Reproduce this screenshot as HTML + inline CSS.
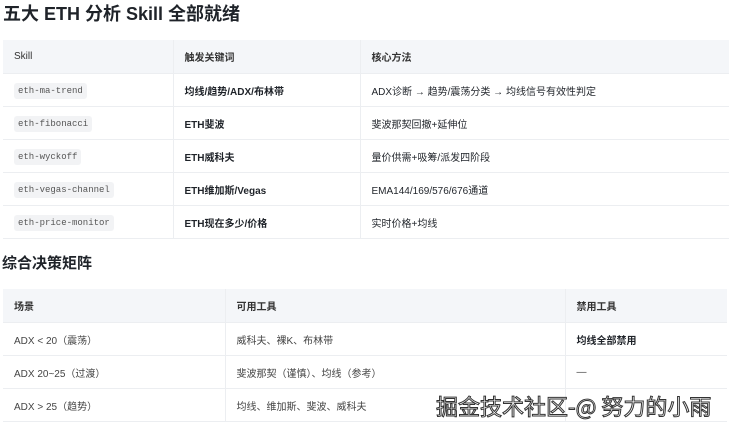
<!DOCTYPE html>
<html><head><meta charset="utf-8"><style>
body{margin:0;width:739px;height:431px;overflow:hidden;background:#fff;font-family:"Liberation Sans","Noto Sans CJK SC",sans-serif;color:#1f2329;position:relative}
h1{position:absolute;left:3px;top:2px;margin:0;font-size:18px;font-weight:bold;line-height:24px}
h2{position:absolute;left:2px;top:252px;margin:0;font-size:15px;font-weight:bold;line-height:24px}
table{position:absolute;border-collapse:collapse;font-size:10px;table-layout:fixed}
td,th{border-bottom:1px solid #eceef1;padding:0 0 0 11px;text-align:left;vertical-align:middle;white-space:nowrap;overflow:hidden}
th{background:#f4f6f9;font-weight:bold;color:#333}
td+td,th+th{border-left:1px solid #eceef1}
.t1{left:3px;top:40px;width:726px}
.t1 th{height:33px}.t1 td{height:32px}
.t2{left:3px;top:289px;width:724px}
.t2 th{height:33px}.t2 td{height:32px;color:#444}
code{font-family:"Liberation Mono",monospace;font-size:9px;background:#f2f3f5;color:#555;padding:3px 4px;border-radius:3px}
.b{font-weight:bold}
.wm{position:absolute;left:436px;top:390px;font-size:22px;color:#fff;font-family:"Noto Sans CJK SC",sans-serif;-webkit-text-stroke:1px #333;letter-spacing:0px}
</style></head><body>
<h1>五大 ETH 分析 Skill 全部就绪</h1>
<table class="t1"><colgroup><col style="width:170px"><col style="width:187px"><col></colgroup>
<tr><th style="font-weight:normal">Skill</th><th>触发关键词</th><th>核心方法</th></tr>
<tr><td><code>eth-ma-trend</code></td><td class="b">均线/趋势/ADX/布林带</td><td>ADX诊断 → 趋势/震荡分类 → 均线信号有效性判定</td></tr>
<tr><td><code>eth-fibonacci</code></td><td class="b">ETH斐波</td><td>斐波那契回撤+延伸位</td></tr>
<tr><td><code>eth-wyckoff</code></td><td class="b">ETH威科夫</td><td>量价供需+吸筹/派发四阶段</td></tr>
<tr><td><code>eth-vegas-channel</code></td><td class="b">ETH维加斯/Vegas</td><td>EMA144/169/576/676通道</td></tr>
<tr><td><code>eth-price-monitor</code></td><td class="b">ETH现在多少/价格</td><td>实时价格+均线</td></tr>
</table>
<h2>综合决策矩阵</h2>
<table class="t2"><colgroup><col style="width:222px"><col style="width:340px"><col></colgroup>
<tr><th>场景</th><th>可用工具</th><th>禁用工具</th></tr>
<tr><td>ADX &lt; 20（震荡）</td><td>威科夫、裸K、布林带</td><td class="b" style="color:#1f2329">均线全部禁用</td></tr>
<tr><td>ADX 20~25（过渡）</td><td>斐波那契（谨慎）、均线（参考）</td><td>—</td></tr>
<tr><td>ADX &gt; 25（趋势）</td><td>均线、维加斯、斐波、威科夫</td><td></td></tr>
</table>
<div class="wm">掘金技术社区-@ 努力的小雨</div>
</body></html>
